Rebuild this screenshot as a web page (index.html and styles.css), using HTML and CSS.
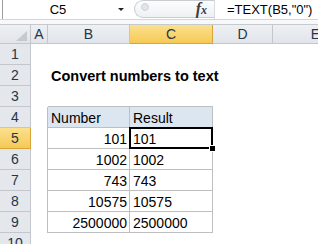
FILE: index.html
```html
<!DOCTYPE html>
<html lang="en">
<head>
  <meta charset="UTF-8">
  <meta name="viewport" content="width=device-width, initial-scale=1.0">
  <title>Convert numbers to text</title>
  <link rel="stylesheet" href="styles.css">
</head>
<body>
<!-- Barra de fórmulas -->
<div class="formula-bar">
  <div class="name-box">
    <span class="name">C5</span>
    <span class="name-arrow"></span>
  </div>
  <div class="splitter">
    <span class="grip"></span>
    <span class="fx"><i>f</i><span class="fx-x">x</span></span>
  </div>
  <div class="formula">=TEXT(B5,"0")</div>
</div>
<div class="bar-gap"></div>

<!-- Planilha -->
<div class="sheet">
  <div class="corner"><span class="corner-mark"></span></div>
  <div class="col-hdr">A</div>
  <div class="col-hdr">B</div>
  <div class="col-hdr selected">C</div>
  <div class="col-hdr">D</div>
  <div class="col-hdr">E</div>

  <div class="row-hdr">1</div><div></div><div></div><div></div><div></div><div></div>

  <div class="row-hdr">2</div><div></div>
  <div class="cell title">Convert numbers to text</div><div></div><div></div><div></div>

  <div class="row-hdr">3</div><div></div>
  <div class="t-top"></div><div class="t-top"></div><div></div><div></div>

  <div class="row-hdr">4</div><div class="t-left"></div>
  <div class="cell t head">Number</div><div class="cell t head">Result</div><div></div><div></div>

  <div class="row-hdr selected">5</div><div class="t-left"></div>
  <div class="cell t num">101</div><div class="cell t active">101</div><div></div><div></div>

  <div class="row-hdr">6</div><div class="t-left"></div>
  <div class="cell t num">1002</div><div class="cell t">1002</div><div></div><div></div>

  <div class="row-hdr">7</div><div class="t-left"></div>
  <div class="cell t num">743</div><div class="cell t">743</div><div></div><div></div>

  <div class="row-hdr">8</div><div class="t-left"></div>
  <div class="cell t num">10575</div><div class="cell t">10575</div><div></div><div></div>

  <div class="row-hdr">9</div><div class="t-left"></div>
  <div class="cell t num">2500000</div><div class="cell t">2500000</div><div></div><div></div>

  <div class="row-hdr">10</div><div></div><div></div><div></div><div></div><div></div>
</div>
</body>
</html>
```

FILE: styles.css
```css
body {
  margin: 0;
  width: 318px;
  height: 244px;
  overflow: hidden;
  background: #fff;
  font-family: "Liberation Sans", Arial, sans-serif;
  color: #000;
}
/* Barra de fórmulas */
.formula-bar {
  display: flex;
  height: 19px;
  padding-left: 2px;
  border-bottom: 1px solid #d2d5d9;
  font-size: 13px;
  line-height: 19px;
}
.name-box {
  display: flex;
  align-items: center;
  width: 128px;
  border-left: 1px solid #9c9c9c;
}
.name {
  width: 110px;
  text-align: center;
}
.name-arrow {
  margin-left: 5px;
  width: 0;
  height: 0;
  border-left: 3px solid transparent;
  border-right: 3px solid transparent;
  border-top: 3px solid #222;
}
.splitter {
  display: flex;
  align-items: center;
  justify-content: space-between;
  box-sizing: border-box;
  width: 80px;
  height: 18px;
  margin-left: 3px;
  padding: 0 7px 0 6px;
  border: 1px solid #c9cdd2;
  border-right: none;
  border-radius: 9px 0 0 9px;
  background: linear-gradient(#fdfdfd, #eef0f2);
}
.grip {
  width: 6px;
  height: 6px;
  margin-top: -5px;
  border-radius: 50%;
  background: #e2e4e7;
  border: 1px solid #d0d3d7;
}
.fx {
  font-family: "Liberation Serif", serif;
  font-size: 16px;
  font-weight: bold;
  color: #3c3c3c;
}
.fx-x {
  font-size: 12px;
  font-style: italic;
}
.formula {
  flex: 1;
  padding-left: 12px;
  border-left: 1px solid #d8dadd;
  white-space: nowrap;
}
.bar-gap {
  height: 4px;
  background: #f7f8f9;
  border-bottom: 1px solid #c6cacf;
}
/* Grade */
.sheet {
  display: grid;
  grid-template-columns: 31px 17px 82px 83px 60px 86px;
  grid-template-rows: 19px repeat(10, 21px);
  font-size: 14px;
}
.sheet > div {
  box-sizing: border-box;
}
.corner,
.col-hdr,
.row-hdr {
  background: linear-gradient(#eef0f3, #e1e4e9);
  border-right: 1px solid #c3c7cd;
  border-bottom: 1px solid #c3c7cd;
  color: #25354a;
  text-align: center;
}
.corner {
  position: relative;
}
.corner-mark {
  position: absolute;
  right: 3px;
  bottom: 2px;
  width: 0;
  height: 0;
  border-left: 11px solid transparent;
  border-bottom: 10px solid #c6c9cd;
}
.col-hdr {
  line-height: 19px;
}
.row-hdr {
  line-height: 19px;
  padding-top: 1px;
  background: #e4e7eb;
}
.col-hdr.selected,
.row-hdr.selected {
  background: linear-gradient(#fbe08f, #f6c954);
  border-color: #d9a43c;
  color: #25354a;
}
.cell {
  line-height: 19px;
  padding: 2px 3px 0;
  white-space: nowrap;
}
.title {
  font-size: 14.5px;
  font-weight: bold;
}
.t {
  border-right: 1px solid #bfbfbf;
  border-bottom: 1px solid #bfbfbf;
}
.t-top {
  border-bottom: 1px solid #bfbfbf;
}
.t-left {
  border-right: 1px solid #bfbfbf;
}
.head {
  background: #dce6f1;
}
.num {
  text-align: right;
  padding-right: 2px;
}
.active {
  position: relative;
}
.active::after {
  content: "";
  position: absolute;
  left: -1px;
  top: -1px;
  right: -1px;
  bottom: -1px;
  border: 2px solid #000;
}
.active::before {
  content: "";
  position: absolute;
  right: -4px;
  bottom: -4px;
  width: 5px;
  height: 5px;
  background: #000;
  border: 1px solid #fff;
  z-index: 1;
}
```
